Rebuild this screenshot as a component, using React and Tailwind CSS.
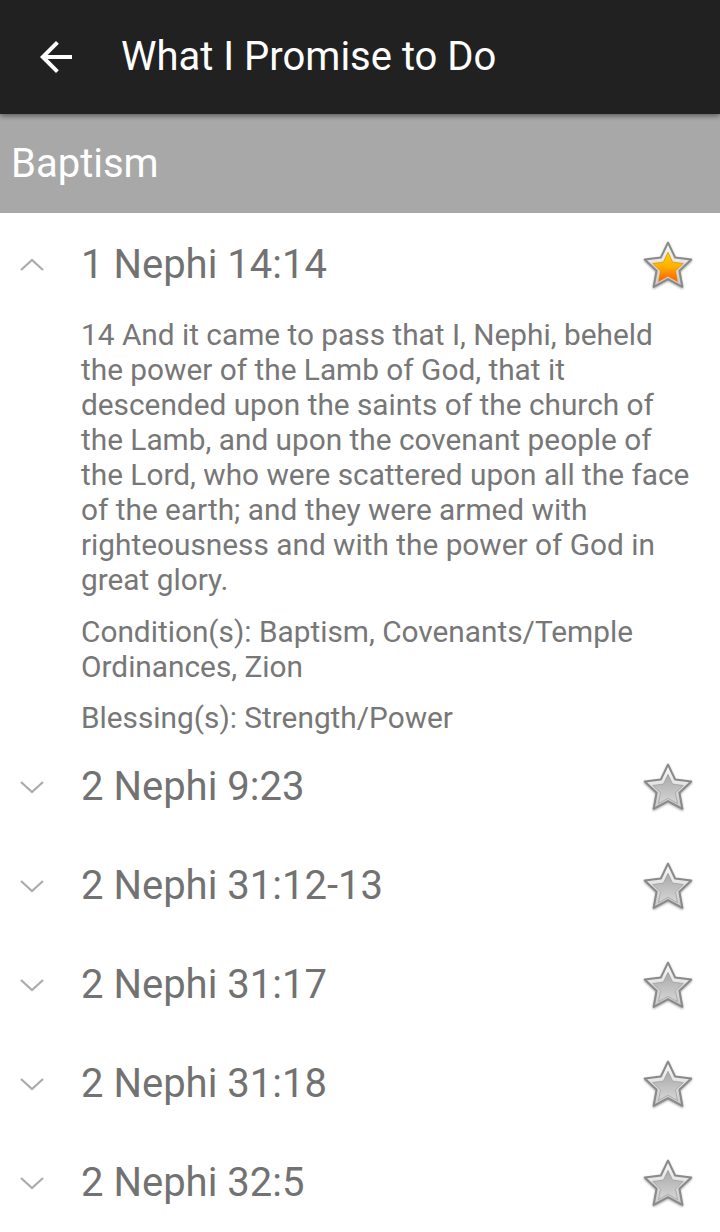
import React from "react";

const STAR =
  "M50 7 L63.5 35.4 L94.7 39.5 L71.9 61.1 L77.6 92 L50 77 L22.4 92 L28.1 61.1 L5.3 39.5 L36.5 35.4 Z";

function Star({ gold, id }) {
  return (
    <svg width="54" height="52" viewBox="0 0 100 100" className="drop-shadow-[0_1px_1px_rgba(0,0,0,0.35)]">
      <defs>
        <linearGradient id={`rim${id}`} x1="0" y1="0" x2="0" y2="1">
          <stop offset="0" stopColor="#fafafa" />
          <stop offset="1" stopColor="#c8c8c8" />
        </linearGradient>
        <linearGradient id={`in${id}`} x1="0" y1="0" x2="0" y2="1">
          {gold ? (
            <>
              <stop offset="0" stopColor="#ffd200" />
              <stop offset="0.5" stopColor="#ffb000" />
              <stop offset="1" stopColor="#ff5a00" />
            </>
          ) : (
            <>
              <stop offset="0" stopColor="#a8a8a8" />
              <stop offset="1" stopColor="#d6d6d6" />
            </>
          )}
        </linearGradient>
      </defs>
      <path d={STAR} fill={`url(#rim${id})`} stroke="#8a8a8a" strokeWidth="4" strokeLinejoin="round" />
      <path
        d={STAR}
        transform="translate(50 58) scale(0.66) translate(-50 -56)"
        fill={`url(#in${id})`}
        stroke={gold ? "#e08a00" : "#9a9a9a"}
        strokeWidth="2"
        strokeLinejoin="round"
      />
    </svg>
  );
}

function Chevron({ up }) {
  return (
    <svg width="26" height="14" viewBox="0 0 26 14">
      <path
        d={up ? "M2 12 L13 2 L24 12" : "M2 2 L13 12 L24 2"}
        fill="none"
        stroke="#ababab"
        strokeWidth="2.2"
      />
    </svg>
  );
}

const rows = ["2 Nephi 9:23", "2 Nephi 31:12-13", "2 Nephi 31:17", "2 Nephi 31:18", "2 Nephi 32:5"];

export default function App() {
  return (
    <div
      className="w-[720px] h-[1232px] bg-white overflow-hidden"
      style={{ fontFamily: "Roboto, 'Noto Sans', sans-serif" }}
    >
      <div className="relative z-10 h-[114px] bg-[#212121] flex items-center shadow-[0_2px_5px_rgba(0,0,0,0.45)]">
        <svg width="48" height="48" viewBox="0 0 24 24" className="ml-[32px]">
          <path d="M20 11H7.83l5.59-5.59L12 4l-8 8 8 8 1.41-1.41L7.83 13H20v-2z" fill="#ffffff" />
        </svg>
        <span className="ml-[41px] text-[40px] text-white leading-none">What I Promise to Do</span>
      </div>
      <div className="h-[99px] bg-[#a8a8a8] flex items-center pl-[11px]">
        <span className="text-[40px] text-white leading-none">Baptism</span>
      </div>

      <div>
        <div className="h-[103px] flex items-center">
          <div className="w-[81px] pl-[19px] flex items-center">
            <Chevron up />
          </div>
          <span className="flex-1 text-[40px] text-[#727272] leading-none">1 Nephi 14:14</span>
          <div className="pr-[25px] flex items-center">
            <Star gold id="g0" />
          </div>
        </div>
        <div className="pl-[81px] pr-[20px] pt-[1px] pb-[2px] text-[29.8px] leading-[35px] text-[#777777]">
          <p>
            14 And it came to pass that I, Nephi, beheld the power of the Lamb of God, that it descended upon the
            saints of the church of the Lamb, and upon the covenant people of the Lord, who were scattered upon all the
            face of the earth; and they were armed with righteousness and with the power of God in great glory.
          </p>
          <p className="mt-[17px]">Condition(s): Baptism, Covenants/Temple Ordinances, Zion</p>
          <p className="mt-[16px]">Blessing(s): Strength/Power</p>
        </div>
      </div>

      {rows.map((r, i) => (
        <div key={r} className="h-[99px] flex items-center">
          <div className="w-[81px] pl-[19px] flex items-center">
            <Chevron />
          </div>
          <span className="flex-1 text-[40px] text-[#727272] leading-none">{r}</span>
          <div className="pr-[25px] flex items-center">
            <Star id={`s${i}`} />
          </div>
        </div>
      ))}
    </div>
  );
}
